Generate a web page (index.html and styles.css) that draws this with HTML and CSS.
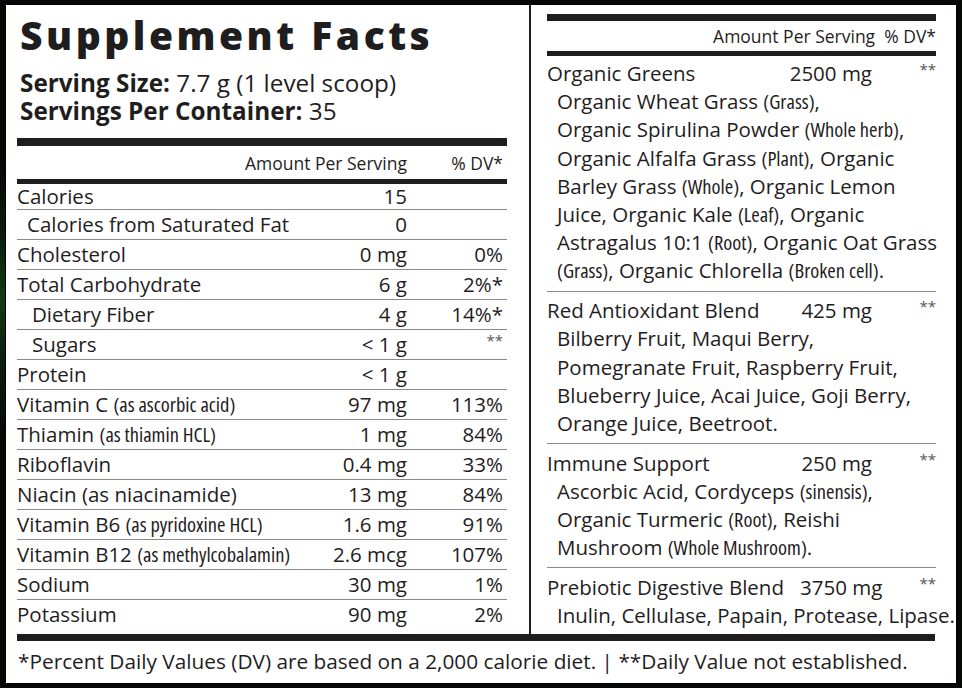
FILE: index.html
```html
<!DOCTYPE html>
<html lang="en">
<head>
<meta charset="utf-8">
<title>Supplement Facts</title>
<link rel="stylesheet" href="styles.css">
</head>
<body>
<div class="label">
  <div class="cols">
    <section class="left">
      <h1 class="title">Supplement Facts</h1>
      <p class="serving"><b>Serving Size:</b> 7.7 g (1 level scoop)</p>
      <p class="serving"><b>Servings Per Container:</b> 35</p>
      <div class="bar bar-top"></div>
      <div class="head"><span class="h-amt">Amount Per Serving</span><span class="h-dv">% DV*</span></div>
      <div class="bar bar-mid"></div>
      <div class="row first"><span>Calories</span><span class="amt">15</span><span class="dv"></span></div>
      <div class="row"><span class="ind1">Calories from Saturated Fat</span><span class="amt">0</span><span class="dv"></span></div>
      <div class="row"><span>Cholesterol</span><span class="amt">0 mg</span><span class="dv">0%</span></div>
      <div class="row"><span>Total Carbohydrate</span><span class="amt">6 g</span><span class="dv">2%*</span></div>
      <div class="row"><span class="ind2">Dietary Fiber</span><span class="amt">4 g</span><span class="dv">14%*</span></div>
      <div class="row"><span class="ind2">Sugars</span><span class="amt">&lt; 1 g</span><span class="dv star">**</span></div>
      <div class="row"><span>Protein</span><span class="amt">&lt; 1 g</span><span class="dv"></span></div>
      <div class="row"><span>Vitamin C <small class="cn">(as ascorbic acid)</small></span><span class="amt">97 mg</span><span class="dv">113%</span></div>
      <div class="row"><span>Thiamin <small class="cn">(as thiamin HCL)</small></span><span class="amt">1 mg</span><span class="dv">84%</span></div>
      <div class="row"><span>Riboflavin</span><span class="amt">0.4 mg</span><span class="dv">33%</span></div>
      <div class="row"><span>Niacin (as niacinamide)</span><span class="amt">13 mg</span><span class="dv">84%</span></div>
      <div class="row"><span>Vitamin B6 <small class="cn">(as pyridoxine HCL)</small></span><span class="amt">1.6 mg</span><span class="dv">91%</span></div>
      <div class="row"><span>Vitamin B12 <small class="cn">(as methylcobalamin)</small></span><span class="amt">2.6 mcg</span><span class="dv">107%</span></div>
      <div class="row"><span>Sodium</span><span class="amt">30 mg</span><span class="dv">1%</span></div>
      <div class="row last"><span>Potassium</span><span class="amt">90 mg</span><span class="dv">2%</span></div>
    </section>
    <div class="divider"></div>
    <section class="right">
      <div class="bar bar-r1"></div>
      <div class="rhead">Amount Per Serving&nbsp;&nbsp;% DV*</div>
      <div class="bar bar-r2"></div>
      <div class="blend">
        <div class="bhead"><span>Organic Greens</span><span class="amt">2500 mg</span><span class="dv star">**</span></div>
        <p class="ing">Organic Wheat Grass <small class="cn">(Grass)</small>,<br>Organic Spirulina Powder <small class="cn">(Whole herb)</small>,<br>Organic Alfalfa Grass <small class="cn">(Plant)</small>, Organic<br>Barley Grass <small class="cn">(Whole)</small>, Organic Lemon<br>Juice, Organic Kale <small class="cn">(Leaf)</small>, Organic<br>Astragalus 10:1 <small class="cn">(Root)</small>, Organic Oat Grass<br><small class="cn">(Grass)</small>, Organic Chlorella <small class="cn">(Broken cell)</small>.</p>
      </div>
      <div class="blend">
        <div class="bhead"><span>Red Antioxidant Blend</span><span class="amt">425 mg</span><span class="dv star">**</span></div>
        <p class="ing">Bilberry Fruit, Maqui Berry,<br>Pomegranate Fruit, Raspberry Fruit,<br>Blueberry Juice, Acai Juice, Goji Berry,<br>Orange Juice, Beetroot.</p>
      </div>
      <div class="blend">
        <div class="bhead"><span>Immune Support</span><span class="amt">250 mg</span><span class="dv star">**</span></div>
        <p class="ing">Ascorbic Acid, Cordyceps <small class="cn">(sinensis)</small>,<br>Organic Turmeric <small class="cn">(Root)</small>, Reishi<br>Mushroom <small class="cn">(Whole Mushroom)</small>.</p>
      </div>
      <div class="blend last">
        <div class="bhead wide"><span>Prebiotic Digestive Blend</span><span class="amt">3750 mg</span><span class="dv star">**</span></div>
        <p class="ing">Inulin, Cellulase, Papain, Protease, Lipase.</p>
      </div>
    </section>
  </div>
  <div class="bar bottom"></div>
  <p class="footer">*Percent Daily Values (DV) are based on a 2,000 calorie diet. | **Daily Value not established.</p>
</div>
</body>
</html>
```

FILE: styles.css
```css
* { box-sizing: border-box; }
html, body { margin: 0; padding: 0; }
body {
  width: 962px;
  height: 688px;
  overflow: hidden;
  background: radial-gradient(circle at 0 300px, #153a16 0, #0b1f0c 60px, #050805 140px), #050805;
  font-family: "Open Sans", "Noto Sans", sans-serif;
  color: #1f1d1e;
}
.label {
  margin: 4px 0 0 5px;
  width: 952px;
  height: 680px;
  background: #fff;
  border: 1px solid #000;
}
.cols {
  display: flex;
  height: 629px;
}
.left {
  margin-left: 11px;
  width: 490px;
}
.divider {
  margin-left: 22px;
  width: 2px;
  background: #1f1d1e;
}
.right {
  margin-left: 16px;
  width: 389px;
}
.title {
  margin: 7px 0 0 3px;
  font-size: 39px;
  line-height: 46px;
  font-weight: 800;
  letter-spacing: 3.5px;
}
.serving {
  margin: 0 0 0 3px;
  font-size: 24.3px;
  line-height: 28px;
}
.title + .serving { margin-top: 11px; }
.serving b { font-weight: 700; }
.bar { background: #1f1d1e; }
.bar-top { height: 8px; margin-top: 13px; }
.bar-mid { height: 5px; }
.head {
  display: flex;
  justify-content: flex-end;
  font-size: 17.5px;
  line-height: 31px;
  padding-top: 2px;
}
.h-dv { width: 100px; text-align: right; padding-right: 4px; }
.row {
  display: grid;
  grid-template-columns: 1fr 110px 100px;
  font-size: 20.5px;
  height: 30px;
  line-height: 29px;
  border-bottom: 1.5px solid #8a8a8a;
  white-space: nowrap;
}
.row.first { height: 26px; line-height: 25px; }
.row.last { border-bottom: 0; }
.row .amt { text-align: right; }
.row .dv { text-align: right; padding-right: 4px; }
.ind1 { padding-left: 10px; }
.ind2 { padding-left: 15px; }
.cn {
  font-size: 20.5px;
  font-stretch: 75%;
  line-height: 1;
}
.star { font-size: 15px; line-height: 20px; color: #555; }
.bar-r1 { height: 7px; margin-top: 9px; }
.rhead {
  font-size: 17.5px;
  line-height: 30px;
  text-align: right;
}
.bar-r2 { height: 5px; }
.blend {
  font-size: 20.5px;
  line-height: 28.2px;
  padding: 3px 0 6px;
  border-bottom: 1.5px solid #8a8a8a;
}
.blend + .blend { padding-top: 4.5px; }
.blend.last { border-bottom: 0; }
.bhead {
  display: grid;
  grid-template-columns: 1fr auto 64px;
  white-space: nowrap;
}
.bhead.wide { grid-template-columns: auto auto 1fr; column-gap: 16px; }
.bhead .dv { text-align: right; }
.ing {
  margin: 0;
  padding-left: 10px;
  white-space: nowrap;
}
.bottom {
  margin-left: 11px;
  width: 918px;
  height: 7px;
}
.footer {
  margin: 6px 0 0 12px;
  font-size: 20.8px;
  line-height: 28px;
  white-space: nowrap;
}
```
